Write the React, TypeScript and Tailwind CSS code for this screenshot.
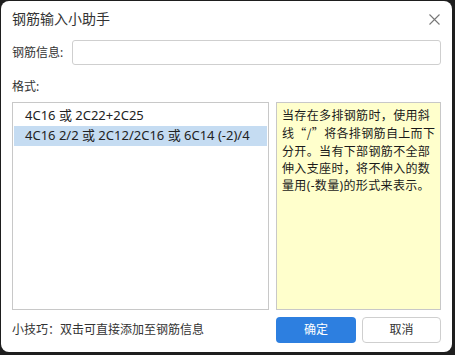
import React from 'react';

const font = { fontFamily: '"Noto Sans", "Noto Sans CJK SC", sans-serif' };

const CloseIcon: React.FC = () => (
  <svg width="11" height="11" viewBox="0 0 11 11" className="text-[#777]">
    <path d="M0.5 0.5 L10.5 10.5 M10.5 0.5 L0.5 10.5" stroke="currentColor" strokeWidth="1.1" fill="none" />
  </svg>
);

const formats = ['4C16 或 2C22+2C25', '4C16 2/2 或 2C12/2C16 或 6C14 (-2)/4'];

export default function App() {
  return (
    <div className="w-[455px] h-[355px] bg-[#1e1e1e] pt-px pl-px" style={font}>
      <div className="w-[451px] h-[351px] bg-white rounded-[8px] flex flex-col px-[11px] text-[#333]">
        {/* Header */}
        <div className="h-[36px] flex items-center justify-between">
          <span className="text-[14px] leading-none">钢筋输入小助手</span>
          <span className="mr-[1px]">
            <CloseIcon />
          </span>
        </div>

        {/* Input row */}
        <div className="mt-[3px] h-[25px] flex items-center">
          <span className="w-[60px] text-[12px]">钢筋信息:</span>
          <input className="flex-1 h-full border border-[#cfcfcf] rounded-[3px] outline-none px-2 text-[12px]" />
        </div>

        <div className="mt-[14px] h-[16px] flex items-center text-[12px]">格式:</div>

        {/* Content */}
        <div className="mt-[7px] h-[208px] flex gap-[7px]">
          <div className="w-[257px] h-full border border-[#c8c8c8] pt-[3px] px-px">
            {formats.map((f, i) => (
              <div
                key={i}
                className={
                  'h-[20px] flex items-center pl-[11px] text-[13px] text-[#222] ' +
                  (i === 1 ? 'bg-[#c5dcf2]' : '')
                }
              >
                {f}
              </div>
            ))}
          </div>
          <div className="flex-1 h-full border border-[#c8c8c8] bg-[#ffffcc] pt-[4px] pl-[5px] pr-[2px] text-[12px] tracking-[0.35px] leading-[17.3px] text-[#1a1a1a] whitespace-nowrap">
            当存在多排钢筋时，使用斜<br />
            线<span className="font-['Noto_Sans_CJK_SC']">“/”</span>将各排钢筋自上而下<br />
            分开。当有下部钢筋不全部<br />
            伸入支座时，将不伸入的数<br />
            量用(-数量)的形式来表示。
          </div>
        </div>

        {/* Footer */}
        <div className="mt-[7px] h-[26px] flex items-center justify-between">
          <span className="text-[12px]">小技巧：双击可直接添加至钢筋信息</span>
          <div className="flex gap-[6px]">
            <button className="w-[80px] h-[26px] rounded-[4px] bg-[#2d7fe0] text-white text-[12px]">确定</button>
            <button className="w-[79px] h-[26px] rounded-[4px] bg-white border border-[#cfcfcf] text-[#333] text-[12px]">
              取消
            </button>
          </div>
        </div>
      </div>
    </div>
  );
}
